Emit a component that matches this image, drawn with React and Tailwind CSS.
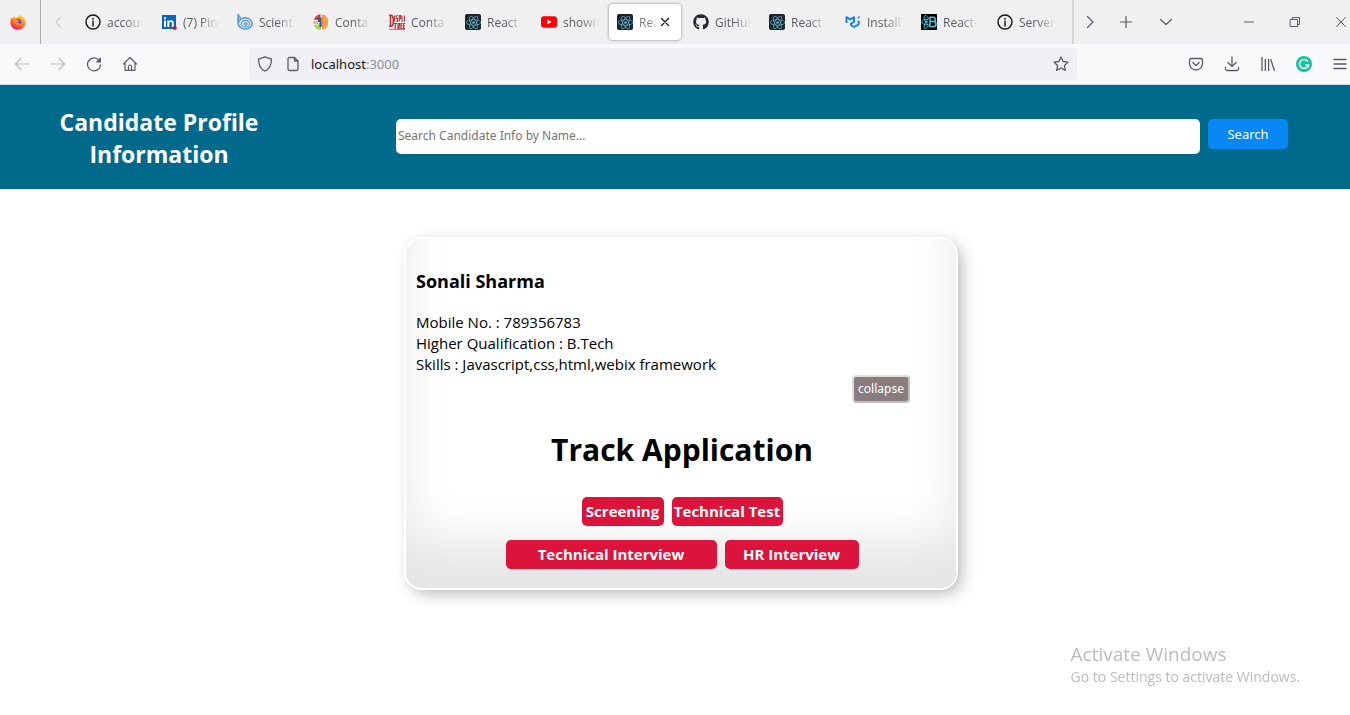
import React from "react";
import { FaGithub, FaReact } from "react-icons/fa";

function FirefoxLogo() {
  return (
    <svg viewBox="0 0 16 16" className="size-4" aria-hidden="true">
      <defs>
        <linearGradient id="fx-flame" x1="0.8" y1="0" x2="0.3" y2="1">
          <stop offset="0" stopColor="#ffe226" />
          <stop offset="0.4" stopColor="#ff9a1f" />
          <stop offset="0.75" stopColor="#ff4a41" />
          <stop offset="1" stopColor="#e31587" />
        </linearGradient>
      </defs>
      <path
        d="M10 .5c.3 1.2 1.2 1.9 2 2.700.3-.2.4-.5.3-.9 2 1.300 3.500 3.700 3.400 6.300-.1 4-3.500 7.200-7.700 7.200S.3 12.600.3 8.500C.3 6.300 1 4.500 2 3.200c.1.6.3 1 .6 1.300C3 3.600 3.700 2.700 4.600 2.200c0 .8.3 1.400.8 1.700C7.500 3.500 9 2.500 10 .5z"
        fill="url(#fx-flame)"
      />
      <circle cx="8.200" cy="8.300" r="3.400" fill="#7543e5" />
      <path d="M3.800 5.600c1.500-.8 2.800-.3 3.700.6 1 0 1.700.2 1.700.6 0 .6-1.200.7-1.500 1.300-.2.700.4 1.400 1.500 1.400 1 0 1.600-.5 2.200-.3-.6 1.700-2 2.600-3.700 2.500-2.300-.2-3.900-2-3.900-4.100z" fill="#ff8a1e" />
    </svg>
  );
}

function InfoIcon() {
  return (
    <svg viewBox="0 0 16 16" className="size-4" aria-hidden="true">
      <circle cx="8" cy="8" r="7" fill="none" stroke="#15141a" strokeWidth="1.400" />
      <circle cx="8" cy="4.700" r="0.900" fill="#15141a" />
      <path d="M8 7v5" stroke="#15141a" strokeWidth="1.400" strokeLinecap="round" />
    </svg>
  );
}

function LinkedInIcon() {
  return (
    <svg viewBox="0 0 16 16" className="size-4" aria-hidden="true">
      <rect x="1" y="1" width="14" height="14" fill="#0a66c2" />
      <path d="M3 6.500h2V13H3zM3 3.200h2v2H3zM6.300 6.500h1.900v.8c.5-.7 1.200-1 2.100-1 1.800 0 2.500 1.200 2.500 3V13h-2V9.700c0-1-.3-1.600-1.100-1.600-.9 0-1.400.6-1.400 1.700V13h-2z" fill="#fff" />
      <circle cx="13.800" cy="14" r="2" fill="#cb112d" />
    </svg>
  );
}

function SpiralIcon() {
  return (
    <svg viewBox="0 0 16 16" className="size-4" fill="none" stroke="#5b9fd6" aria-hidden="true">
      <path d="M1.200 0v9.500" strokeWidth="2" />
      <ellipse cx="8.200" cy="9.500" rx="6.900" ry="5.600" strokeWidth="1.700" />
      <ellipse cx="8.400" cy="9.700" rx="4.200" ry="3.200" strokeWidth="1.300" />
      <ellipse cx="8.600" cy="9.900" rx="1.600" ry="1.100" strokeWidth="1.300" />
      <path d="M1.200 1.500c2 1 2.500 2.500 2.300 4" strokeWidth="1.200" />
    </svg>
  );
}

function PieIcon() {
  return (
    <svg viewBox="0 0 16 16" className="size-4" aria-hidden="true">
      <path d="M7.500 6H1A7.500 7.500 0 0 1 7.500.3z" fill="#d5402f" />
      <path d="M9 .2a8 8 0 0 1 0 15.600z" fill="#f59a4f" />
      <path d="M8 10v6a8 8 0 0 1-7.300-5z" fill="#a9d65c" />
      <path d="M.3 7H5v3H.6z" fill="#f5bb49" />
      <path d="M5 3.500h3v9.500H6.500V8H5z" fill="#2b5c96" />
      <path d="M8 3.500v9.500l1.500-1V4z" fill="#e86a35" />
    </svg>
  );
}

function DisplayIcon() {
  return (
    <svg viewBox="0 0 16 16" className="size-4" fill="none" stroke="#b5363c" aria-hidden="true">
      <path d="M0 1.300h2c3.200 0 3.200 11 0 11H0M1.500 1v11.500" strokeWidth="1.600" />
      <path d="M5.500 1.500v6M8.800 1.800H7.300v2.400h1.300v3H7M10.300 7.500v-6h1.200v3h-1M13 1.500v5.600h.8M15.500 1.500v6" strokeWidth="1.100" />
      <path d="M4.500 9.500H8M6.300 9.500V15M9 15V9.500h1.500v2.500H9.200l1.600 3M13.500 9.500h-1.500v5h1.500M12 12h1.300M16 9.500h-1.500v5H16M14.500 12H16" strokeWidth="1.200" />
      <path d="M0 15.300h16" strokeWidth="0.800" />
    </svg>
  );
}

function ReactIcon() {
  return (
    <span className="flex size-4 items-center justify-center rounded-xs bg-[#20232a]">
      <FaReact className="size-[15px] text-[#53bcd8]" aria-hidden="true" />
    </span>
  );
}

function YouTubeIcon() {
  return (
    <svg viewBox="0 0 16 16" className="size-4" aria-hidden="true">
      <rect x="0" y="2.300" width="16" height="11.400" rx="3" fill="#f00" />
      <path d="M6.500 5.600v4.800L10.600 8z" fill="#fff" />
    </svg>
  );
}

function MuiIcon() {
  return (
    <svg viewBox="0 0 16 16" className="size-4" fill="none" stroke="#1482f5" strokeWidth="2" aria-hidden="true">
      <path d="M1.500 9V3.200l3.700 2.300L9 3.200v4.600L6 9.500v1.600l3.200 1.900 4.500-2.600V6.800" strokeLinejoin="round" />
      <path d="M12.700 4.700V3l2-1v1.700z" fill="#1482f5" stroke="none" />
    </svg>
  );
}

function ReactBootstrapIcon() {
  return (
    <svg viewBox="0 0 16 16" className="size-4" fill="none" stroke="#41c8e5" aria-hidden="true">
      <rect width="16" height="16" fill="#000" stroke="none" />
      <path d="M9 3.200h3.300c2.600 0 2.600 4.400 0 4.400H9h3.700c3 0 3 5 0 5H9z" strokeWidth="1.500" />
      <path d="M7.500 5.200C3.500 5 .8 6.300.8 8s2.700 3 6.700 2.800" />
      <path d="M7.500 4.500C6 1 3.300.7 3 2.700c-.3 2.500 2 6.300 4.500 8.800M7.500 11.500c-1.500 3.500-4.200 3.800-4.500 1.800-.3-2.500 2-6.300 4.500-8.800" />
      <circle cx="5.800" cy="8" r="1" fill="#41c8e5" stroke="none" />
    </svg>
  );
}

function Line({ d, className = "size-4", width = 1.2 }) {
  return (
    <svg
      viewBox="0 0 16 16"
      className={className}
      fill="none"
      stroke="currentColor"
      strokeWidth={width}
      strokeLinecap="round"
      strokeLinejoin="round"
      aria-hidden="true"
    >
      <path d={d} />
    </svg>
  );
}

const tabs = [
  { title: "account", icon: <InfoIcon /> },
  { title: "(7) Ping", icon: <LinkedInIcon /> },
  { title: "Scient", icon: <SpiralIcon /> },
  { title: "Conta", icon: <PieIcon /> },
  { title: "Conta", icon: <DisplayIcon /> },
  { title: "React :", icon: <ReactIcon /> },
  { title: "showin", icon: <YouTubeIcon /> },
  { title: "React", icon: <ReactIcon />, active: true },
  { title: "GitHub", icon: <FaGithub className="size-4 text-[#24292f]" aria-hidden="true" /> },
  { title: "React :", icon: <ReactIcon /> },
  { title: "Install", icon: <MuiIcon /> },
  { title: "React-", icon: <ReactBootstrapIcon /> },
  { title: "Server", icon: <InfoIcon /> },
];

function Tab({ title, icon, active }) {
  if (active) {
    return (
      <div className="flex h-full w-19 flex-none items-center px-0.5 py-1">
        <div className="flex h-9 w-full items-center rounded-sm bg-white px-2 shadow-[0_0_3px_rgba(0,0,0,0.45)]">
          <button type="button" role="tab" aria-selected="true" className="flex min-w-0 flex-1 items-center gap-1.5">
            <span className="flex-none">{icon}</span>
            <span className="min-w-0 overflow-hidden pt-0.5 whitespace-nowrap opacity-80 mask-r-from-60% mask-r-to-100%">{title}</span>
          </button>
          <button type="button" aria-label="Close tab" className="flex-none text-[#15141a]">
            <Line d="M4.500 4.500l7 7M11.500 4.500l-7 7" />
          </button>
        </div>
      </div>
    );
  }
  return (
    <button type="button" role="tab" aria-selected="false" className="flex h-full w-19 flex-none items-center gap-1.5 pr-2 pl-2.5">
      <span className="flex-none">{icon}</span>
      <span className="min-w-0 flex-1 overflow-hidden pt-0.5 text-left whitespace-nowrap mask-r-from-50% mask-r-to-100%">{title}</span>
    </button>
  );
}

function IconButton({ label, className = "w-9", children }) {
  return (
    <button type="button" aria-label={label} className={`flex h-8 flex-none items-center justify-center ${className}`}>
      {children}
    </button>
  );
}

function TabStrip() {
  return (
    <div className="flex h-11 items-center bg-[#f0f0f0] text-xs text-[#5b5b66]">
      <button type="button" aria-label="Firefox" className="flex h-full w-[41px] flex-none items-center border-r border-[#aaaaaa] pl-2.5">
        <FirefoxLogo />
      </button>
      <IconButton label="Scroll tabs left" className="w-[34px] text-[#d0d0d3]">
        <Line d="M10.500 3L6 8l4.500 5" />
      </IconButton>
      <div role="tablist" className="flex h-full min-w-0 flex-1 overflow-hidden border-r-2 border-[#d4d4d6]">
        {tabs.map((tab, i) => (
          <Tab key={i} {...tab} />
        ))}
      </div>
      <div className="flex flex-none items-center text-[#5b5b66]">
        <IconButton label="Scroll tabs right" className="w-8">
          <Line d="M5.500 2.500L11 8l-5.500 5.500" />
        </IconButton>
        <IconButton label="New tab" className="w-10">
          <Line d="M8 2.500v11M2.500 8h11" />
        </IconButton>
        <IconButton label="List all tabs" className="w-10">
          <Line d="M2.500 5.500L8 10.500l5.500-5" />
        </IconButton>
        <IconButton label="Minimize" className="ml-10 w-[46px]">
          <Line d="M3.500 8h9" width={1} />
        </IconButton>
        <IconButton label="Restore" className="w-[46px]">
          <Line d="M3.500 5.500h7v7h-7zM5.500 5.500v-2h7v7h-2" width={1} />
        </IconButton>
        <IconButton label="Close" className="w-8 pl-[14px]">
          <Line d="M3.500 3.500l9 9M12.500 3.500l-9 9" width={1} />
        </IconButton>
      </div>
    </div>
  );
}

function NavBar() {
  return (
    <div className="flex h-[41px] items-center border-b border-[#c4dde6] bg-[#f9f9fb] pl-1 text-[#5b5b66]">
      <IconButton label="Back" className="w-9 text-[#bdbdc2]">
        <Line d="M15 8H1.500M7 2.500L1.500 8 7 13.500" />
      </IconButton>
      <IconButton label="Forward" className="w-9 text-[#bdbdc2]">
        <Line d="M1 8h13.500M9 2.500L14.500 8 9 13.500" />
      </IconButton>
      <IconButton label="Reload">
        <svg viewBox="0 0 16 16" className="size-4" aria-hidden="true">
          <path d="M13 4.200A6.500 6.500 0 1 0 14.500 9" fill="none" stroke="currentColor" strokeWidth="1.300" strokeLinecap="round" />
          <path d="M15 1v5.500H9.500z" fill="currentColor" />
        </svg>
      </IconButton>
      <IconButton label="Home">
        <Line d="M1.500 8L8 1.500 14.500 8M3 7v7.300h10V7M6.500 14v-3.500a1.500 1.500 0 0 1 3 0V14" />
      </IconButton>
      <div className="ml-[101px] flex h-8 min-w-0 flex-1 items-center rounded-sm bg-[#f0f0f4]">
        <IconButton label="Tracking protection" className="w-8">
          <Line d="M8 .8l6.500 2.300c0 5-1.500 9.900-6.500 12-5-2.100-6.500-7-6.500-12z" width={1.3} />
        </IconButton>
        <IconButton label="Site information" className="w-6">
          <Line d="M9.500 1.500h-5a1.500 1.500 0 0 0-1.500 1.500v10a1.500 1.500 0 0 0 1.500 1.500h7a1.500 1.500 0 0 0 1.500-1.500V5zM9.500 1.500V5H13" width={1.3} />
        </IconButton>
        <a href="#address" className="ml-1.5 flex-1 pt-0.5 font-['Noto_Sans'] text-[13px] text-[#8f8f9a]">
          <span className="text-[#15141a]">localhost</span>:3000
        </a>
        <IconButton label="Bookmark this page" className="w-8">
          <Line d="M8 1l2.100 4.500 4.900.6-3.600 3.400.9 4.900L8 12l-4.300 2.400.9-4.900L1 6.100l4.900-.6z" width={1.3} />
        </IconButton>
      </div>
      <div className="ml-[101px] flex">
        <IconButton label="Save to Pocket">
          <Line d="M3 2.500h10A1.500 1.500 0 0 1 14.500 4v3.500a6.500 6.500 0 0 1-13 0V4A1.500 1.500 0 0 1 3 2.500zM4.800 6.500L8 9.500l3.200-3" width={1.3} />
        </IconButton>
        <IconButton label="Downloads">
          <Line d="M8 1v9.500M3.800 6.500L8 10.500l4.200-4M1.500 11.500v1.500a1.500 1.500 0 0 0 1.500 1.500h10a1.500 1.500 0 0 0 1.500-1.500v-1.500" width={1.3} />
        </IconButton>
        <IconButton label="Library">
          <Line d="M2 1.500v13M5.300 3.500v11M8.600 3.500v11M10.800 3.500l3.600 11" width={1.3} />
        </IconButton>
        <IconButton label="Grammarly">
          <svg viewBox="0 0 16 16" className="size-4" aria-hidden="true">
            <circle cx="8" cy="8" r="8" fill="#15c39a" />
            <path d="M11.800 5.500A4.500 4.500 0 1 0 12.400 9H9.200M12.400 9v2.500" fill="none" stroke="#fff" strokeWidth="1.500" />
          </svg>
        </IconButton>
        <IconButton label="Open menu" className="w-7 pl-2">
          <Line d="M2 3.500h12M2 8h12M2 12.500h12" width={1.3} />
        </IconButton>
      </div>
    </div>
  );
}

function Header() {
  return (
    <header className="flex items-start bg-[#006a8c] pt-[21px] pb-[19px]">
      <h2 className="w-[318px] flex-none px-10 text-center text-[23px] leading-8 font-bold text-white">
        Candidate Profile Information
      </h2>
      <form className="mt-[13px] mr-[62px] ml-[78px] flex min-w-0 flex-1 items-start gap-2" onSubmit={(e) => e.preventDefault()}>
        <input
          type="text"
          aria-label="Search candidates"
          placeholder="Search Candidate Info by Name..."
          className="h-[35px] min-w-0 flex-1 rounded-[5px] bg-white px-0.5 pb-0.5 font-['Noto_Sans'] text-xs text-black placeholder:text-[#757575]"
        />
        <button type="submit" className="h-[30px] w-20 flex-none rounded-[5px] bg-[#0987f5] pt-0.5 font-['Noto_Sans'] text-[13px] text-white">
          Search
        </button>
      </form>
    </header>
  );
}

function Stage({ className = "", children }) {
  return (
    <button type="button" className={`h-[29px] rounded-[5px] bg-[#dc143c] text-[15px] font-bold whitespace-nowrap text-white ${className}`}>
      {children}
    </button>
  );
}

function CandidateCard() {
  return (
    <article className="w-[550px] rounded-2xl p-2.5 text-black shadow-[inset_0_-48px_48px_rgba(0,0,0,0.1),0_0_0_2px_#ffffff,5px_5px_16px_rgba(0,0,0,0.3)]">
      <h3 className="mt-5 text-lg leading-[25px] font-bold">Sonali Sharma</h3>
      <div className="mt-[18px] text-[15px] leading-[21px]">
        <p>Mobile No. : 789356783</p>
        <p>Higher Qualification : B.Tech</p>
        <p>Skills : Javascript,css,html,webix framework</p>
      </div>
      <div className="mr-9 flex justify-end">
        <button type="button" className="h-7 w-[58px] rounded-sm border-2 border-t-[#dedede] border-r-[#bdbdbd] border-b-[#bdbdbd] border-l-[#dedede] bg-[#887c7e] font-['Noto_Sans'] text-xs text-white">
          collapse
        </button>
      </div>
      <section className="pl-0.5">
        <h1 className="mt-[25px] text-center text-[30px] leading-[43px] font-bold">Track Application</h1>
        <div className="mt-[26px] flex justify-center gap-2">
          <Stage className="w-[82px]">Screening</Stage>
          <Stage className="w-[111px]">Technical Test</Stage>
        </div>
        <div className="mt-[14px] mb-[9px] flex justify-center gap-2">
          <Stage className="w-[211px]">Technical Interview</Stage>
          <Stage className="w-[134px]">HR Interview</Stage>
        </div>
      </section>
    </article>
  );
}

export default function App() {
  return (
    <div className="min-h-screen bg-white font-['Open_Sans','Noto_Sans',sans-serif]">
      <TabStrip />
      <NavBar />
      <Header />
      <main className="flex justify-center pt-[50px] pb-12 pl-3">
        <CandidateCard />
      </main>
      <aside className="pointer-events-none fixed right-[50px] bottom-7 text-[#bcbcbc]">
        <p className="text-[19px] leading-6">Activate Windows</p>
        <p className="text-sm leading-[21px]">Go to Settings to activate Windows.</p>
      </aside>
    </div>
  );
}
